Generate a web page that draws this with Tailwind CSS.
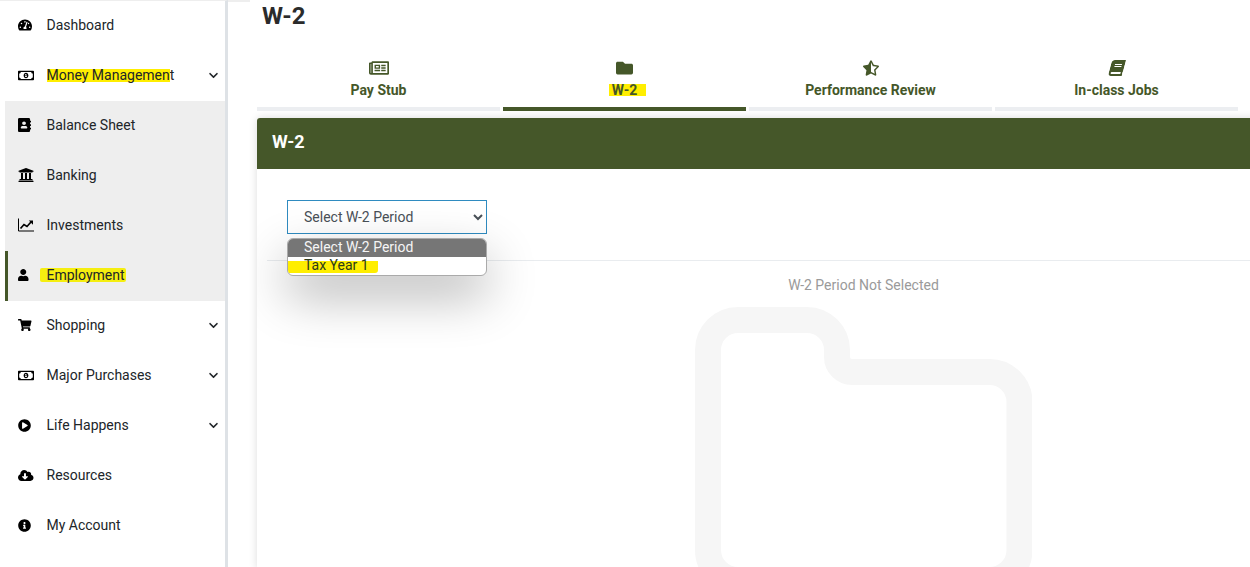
<!DOCTYPE html>
<html lang="en">
<head>
  <meta charset="UTF-8">
  <meta name="viewport" content="width=device-width, initial-scale=1.0">
  <title>W-2</title>
  <script src="https://cdn.jsdelivr.net/npm/@tailwindcss/browser@4"></script>
</head>
<body class="h-[567px] overflow-hidden bg-white font-[Roboto,sans-serif] text-sm text-[#212529]">
  <div class="flex h-[567px] w-[1250px] overflow-hidden">

    <!-- sidebar -->
    <aside class="h-full w-[228px] shrink-0 border-t border-r-[3px] border-t-[#eeeeee] border-r-[#dee2e6]">
      <nav class="flex flex-col">
        <a class="flex h-[50px] items-center pb-[2px] pl-[18px]">
          <span class="flex w-[28.5px] shrink-0 text-black"><svg class="h-[14px] w-[14px]" viewBox="0 0 576 512" fill="currentColor"><path d="M288 32C128.94 32 0 160.94 0 320c0 52.8 14.25 102.26 39.06 144.8 5.61 9.62 16.3 15.2 27.44 15.2h443c11.14 0 21.83-5.58 27.44-15.2C561.75 422.26 576 372.8 576 320c0-159.06-128.94-288-288-288zm0 64c14.71 0 26.58 10.13 30.32 23.65-1.11 2.26-2.64 4.23-3.45 6.67l-9.22 27.67c-5.13 3.49-10.97 6.01-17.64 6.01-17.67 0-32-14.33-32-32S270.33 96 288 96zM96 384c-17.67 0-32-14.33-32-32s14.33-32 32-32 32 14.33 32 32-14.33 32-32 32zm48-160c-17.67 0-32-14.33-32-32s14.33-32 32-32 32 14.33 32 32-14.33 32-32 32zm246.77-72.41l-61.33 184C343.13 347.33 352 364.54 352 384c0 11.72-3.38 22.55-8.88 32H232.88c-5.5-9.45-8.88-20.28-8.88-32 0-33.94 26.5-61.43 59.9-63.59l61.34-184.01c4.17-12.56 17.73-19.45 30.36-15.17 12.57 4.19 19.35 17.77 15.17 30.36zm14.66 57.2l15.52-46.55c3.47-1.29 7.13-2.23 11.05-2.23 17.67 0 32 14.33 32 32s-14.33 32-32 32c-11.38-.01-20.89-6.28-26.57-15.22zM480 384c-17.67 0-32-14.33-32-32s14.33-32 32-32 32 14.33 32 32-14.33 32-32 32z"/></svg></span>
          <span>Dashboard</span>
        </a>
        <a class="flex h-[50px] items-center pb-[2px] pl-[18px] pr-[7px]">
          <span class="flex w-[28.5px] shrink-0 text-black"><svg class="h-[15px] w-[16px]" viewBox="0 0 640 512" fill="currentColor"><path d="M320 144c-53.02 0-96 50.14-96 112 0 61.85 42.98 112 96 112 53 0 96-50.13 96-112 0-61.86-42.98-112-96-112zm40 168c0 4.42-3.58 8-8 8h-64c-4.42 0-8-3.58-8-8v-16c0-4.42 3.58-8 8-8h16v-55.44l-.47.31a7.992 7.992 0 0 1-11.09-2.22l-8.88-13.31a7.992 7.992 0 0 1 2.22-11.09l15.33-10.22a23.99 23.99 0 0 1 13.31-4.03H328c4.42 0 8 3.58 8 8v88h16c4.42 0 8 3.58 8 8v16zM608 64H32C14.33 64 0 78.33 0 96v320c0 17.67 14.33 32 32 32h576c17.67 0 32-14.33 32-32V96c0-17.67-14.33-32-32-32zm-16 272c-35.35 0-64 28.65-64 64H112c0-35.35-28.65-64-64-64V176c35.35 0 64-28.65 64-64h416c0 35.35 28.65 64 64 64v160z"/></svg></span>
          <span><span class="inline-block bg-[#ffee00] leading-[13px]">Money Managemen</span>t</span>
          <svg class="ml-auto h-[11px] w-[9px]" viewBox="0 0 448 512" fill="currentColor"><path d="M207.029 381.476L12.686 187.132c-9.373-9.373-9.373-24.569 0-33.941l22.667-22.667c9.357-9.357 24.522-9.375 33.901-.04L224 284.505l154.745-154.021c9.379-9.335 24.544-9.317 33.901.04l22.667 22.667c9.373 9.373 9.373 24.569 0 33.941L240.971 381.476c-9.373 9.372-24.569 9.372-33.942 0z"/></svg>
        </a>

        <div class="ml-[5px] flex flex-col bg-[#eeeeee]">
          <a class="flex h-[50px] items-center pb-[2px] pl-[13px]">
            <span class="flex w-[28.5px] shrink-0 text-black"><svg class="h-[14px] w-[13px]" viewBox="0 0 448 512" preserveAspectRatio="none" fill="currentColor"><path d="M436 160c6.6 0 12-5.4 12-12v-40c0-6.6-5.4-12-12-12h-20V48c0-26.5-21.5-48-48-48H48C21.5 0 0 21.5 0 48v416c0 26.5 21.5 48 48 48h320c26.5 0 48-21.5 48-48v-48h20c6.6 0 12-5.4 12-12v-40c0-6.6-5.4-12-12-12h-20v-64h20c6.6 0 12-5.4 12-12v-40c0-6.6-5.4-12-12-12h-20v-64h20zm-228-32c35.3 0 64 28.7 64 64s-28.7 64-64 64-64-28.7-64-64 28.7-64 64-64zm112 236.8c0 10.6-10 19.2-22.4 19.2H118.4C106 384 96 375.4 96 364.8v-19.2c0-31.8 30.1-57.6 67.2-57.6h5c12.3 5.1 25.7 8 39.8 8s27.6-2.9 39.8-8h5c37.1 0 67.2 25.8 67.2 57.6v19.2z"/></svg></span>
            <span>Balance Sheet</span>
          </a>
          <a class="flex h-[50px] items-center pb-[2px] pl-[13px]">
            <span class="flex w-[28.5px] shrink-0 text-black"><svg class="h-[16px] w-[16px]" viewBox="0 0 512 512" fill="currentColor"><path d="M496 128v16a8 8 0 0 1-8 8h-24v12c0 6.627-5.373 12-12 12H60c-6.627 0-12-5.373-12-12v-12H24a8 8 0 0 1-8-8v-16a8 8 0 0 1 4.941-7.392l232-88a7.996 7.996 0 0 1 6.118 0l232 88A8 8 0 0 1 496 128zm-24 304H40c-13.255 0-24 10.745-24 24v16a8 8 0 0 0 8 8h464a8 8 0 0 0 8-8v-16c0-13.255-10.745-24-24-24zM96 192v192H60c-6.627 0-12 5.373-12 12v20h416v-20c0-6.627-5.373-12-12-12h-36V192h-64v192h-64V192h-64v192h-64V192H96z"/></svg></span>
            <span>Banking</span>
          </a>
          <a class="flex h-[50px] items-center pb-[2px] pl-[13px]">
            <span class="flex w-[28.5px] shrink-0 text-black"><svg class="h-[14px] w-[16px]" viewBox="0 0 16 14" fill="none" stroke="currentColor"><path d="M.5 .5V13H16"/><path d="M2.5 10.5L6 6.5L9 8.5L13 4" stroke-width="1.7"/><path d="M10.8 2.6H15V6.8Z" fill="currentColor" stroke="none"/></svg></span>
            <span>Investments</span>
          </a>
          <a class="flex h-[50px] items-center border-l-[3px] border-l-[#455729] pb-[2px] pl-[10px]">
            <span class="flex w-[28.5px] shrink-0 text-black"><svg class="h-[12px] w-[10.5px]" viewBox="0 0 448 512" fill="currentColor"><path d="M224 256c70.7 0 128-57.3 128-128S294.7 0 224 0 96 57.3 96 128s57.3 128 128 128zm89.6 32h-16.7c-22.2 10.2-46.9 16-72.9 16s-50.6-5.8-72.9-16h-16.7C60.2 288 0 348.2 0 422.4V464c0 26.5 21.5 48 48 48h352c26.5 0 48-21.5 48-48v-41.6c0-74.2-60.2-134.4-134.4-134.4z"/></svg></span>
            <span class="-ml-[7px] inline-block rounded-[2px] bg-[#f5ee10] pl-[7px] pr-px leading-[14px]">Employment</span>
          </a>
        </div>

        <a class="flex h-[50px] items-center pb-[2px] pl-[18px] pr-[7px]">
          <span class="flex w-[28.5px] shrink-0 text-black"><svg class="h-[12px] w-[13.5px]" viewBox="0 0 576 512" fill="currentColor"><path d="M528.12 301.319l47.273-208C578.806 78.301 567.391 64 551.99 64H159.208l-9.166-44.81C147.758 8.021 137.93 0 126.529 0H24C10.745 0 0 10.745 0 24v16c0 13.255 10.745 24 24 24h69.883l70.248 343.435C147.325 417.1 136 435.222 136 456c0 30.928 25.072 56 56 56s56-25.072 56-56c0-15.674-6.447-29.835-16.824-40h209.647C430.447 426.165 424 440.326 424 456c0 30.928 25.072 56 56 56s56-25.072 56-56c0-22.172-12.888-41.332-31.579-50.405l5.517-24.276c3.413-15.018-8.002-29.319-23.403-29.319H218.117l-6.545-32h293.145c11.206 0 20.92-7.754 23.403-18.681z"/></svg></span>
          <span>Shopping</span>
          <svg class="ml-auto h-[11px] w-[9px]" viewBox="0 0 448 512" fill="currentColor"><path d="M207.029 381.476L12.686 187.132c-9.373-9.373-9.373-24.569 0-33.941l22.667-22.667c9.357-9.357 24.522-9.375 33.901-.04L224 284.505l154.745-154.021c9.379-9.335 24.544-9.317 33.901.04l22.667 22.667c9.373 9.373 9.373 24.569 0 33.941L240.971 381.476c-9.373 9.372-24.569 9.372-33.942 0z"/></svg>
        </a>
        <a class="flex h-[50px] items-center pb-[2px] pl-[18px] pr-[7px]">
          <span class="flex w-[28.5px] shrink-0 text-black"><svg class="h-[15px] w-[16px]" viewBox="0 0 640 512" fill="currentColor"><path d="M320 144c-53.02 0-96 50.14-96 112 0 61.85 42.98 112 96 112 53 0 96-50.13 96-112 0-61.86-42.98-112-96-112zm40 168c0 4.42-3.58 8-8 8h-64c-4.42 0-8-3.58-8-8v-16c0-4.42 3.58-8 8-8h16v-55.44l-.47.31a7.992 7.992 0 0 1-11.09-2.22l-8.88-13.31a7.992 7.992 0 0 1 2.22-11.09l15.33-10.22a23.99 23.99 0 0 1 13.31-4.03H328c4.42 0 8 3.58 8 8v88h16c4.42 0 8 3.58 8 8v16zM608 64H32C14.33 64 0 78.33 0 96v320c0 17.67 14.33 32 32 32h576c17.67 0 32-14.33 32-32V96c0-17.67-14.33-32-32-32zm-16 272c-35.35 0-64 28.65-64 64H112c0-35.35-28.65-64-64-64V176c35.35 0 64-28.65 64-64h416c0 35.35 28.65 64 64 64v160z"/></svg></span>
          <span>Major Purchases</span>
          <svg class="ml-auto h-[11px] w-[9px]" viewBox="0 0 448 512" fill="currentColor"><path d="M207.029 381.476L12.686 187.132c-9.373-9.373-9.373-24.569 0-33.941l22.667-22.667c9.357-9.357 24.522-9.375 33.901-.04L224 284.505l154.745-154.021c9.379-9.335 24.544-9.317 33.901.04l22.667 22.667c9.373 9.373 9.373 24.569 0 33.941L240.971 381.476c-9.373 9.372-24.569 9.372-33.942 0z"/></svg>
        </a>
        <a class="flex h-[50px] items-center pb-[2px] pl-[18px] pr-[7px]">
          <span class="flex w-[28.5px] shrink-0 text-black"><svg class="h-[13px] w-[13px]" viewBox="0 0 512 512" fill="currentColor"><path d="M256 8C119 8 8 119 8 256s111 248 248 248 248-111 248-248S393 8 256 8zm115.7 272l-176 101c-15.8 8.8-35.7-2.5-35.7-20.9V152c0-18.3 19.8-29.7 35.7-20.9l176 107c16.4 9.2 16.4 32.9 0 41.9z"/></svg></span>
          <span>Life Happens</span>
          <svg class="ml-auto h-[11px] w-[9px]" viewBox="0 0 448 512" fill="currentColor"><path d="M207.029 381.476L12.686 187.132c-9.373-9.373-9.373-24.569 0-33.941l22.667-22.667c9.357-9.357 24.522-9.375 33.901-.04L224 284.505l154.745-154.021c9.379-9.335 24.544-9.317 33.901.04l22.667 22.667c9.373 9.373 9.373 24.569 0 33.941L240.971 381.476c-9.373 9.372-24.569 9.372-33.942 0z"/></svg>
        </a>
        <a class="flex h-[50px] items-center pb-[2px] pl-[18px]">
          <span class="flex w-[28.5px] shrink-0 text-black"><svg class="h-[13px] w-[15.5px]" viewBox="0 0 640 512" fill="currentColor"><path d="M537.6 226.6c4.1-10.7 6.4-22.4 6.4-34.6 0-53-43-96-96-96-19.7 0-38.1 6-53.3 16.2C367 64.2 315.3 32 256 32c-88.4 0-160 71.6-160 160 0 2.7.1 5.4.2 8.1C40.2 219.8 0 273.2 0 336c0 79.5 64.5 144 144 144h368c70.7 0 128-57.3 128-128 0-61.9-44-113.6-102.4-125.4zm-132.9 88.7L299.3 420.7c-6.2 6.2-16.4 6.2-22.6 0L171.3 315.3c-10.1-10.1-2.9-27.3 11.3-27.3H248V176c0-8.8 7.2-16 16-16h48c8.8 0 16 7.2 16 16v112h65.4c14.2 0 21.4 17.2 11.3 27.3z"/></svg></span>
          <span>Resources</span>
        </a>
        <a class="flex h-[50px] items-center pb-[2px] pl-[18px]">
          <span class="flex w-[28.5px] shrink-0 text-black"><svg class="h-[13px] w-[13px]" viewBox="0 0 512 512" fill="currentColor"><path d="M256 8C119.043 8 8 119.083 8 256c0 136.997 111.043 248 248 248s248-111.003 248-248C504 119.083 392.957 8 256 8zm0 110c23.196 0 42 18.804 42 42s-18.804 42-42 42-42-18.804-42-42 18.804-42 42-42zm56 254c0 6.627-5.373 12-12 12h-88c-6.627 0-12-5.373-12-12v-24c0-6.627 5.373-12 12-12h12v-64h-12c-6.627 0-12-5.373-12-12v-24c0-6.627 5.373-12 12-12h64c6.627 0 12 5.373 12 12v100h12c6.627 0 12 5.373 12 12v24z"/></svg></span>
          <span>My Account</span>
        </a>
      </nav>
    </aside>

    <!-- main -->
    <main class="w-[1022px] shrink-0">
      <div class="h-[2px] w-[22px] bg-[#eeeeee]"></div>
      <h1 class="h-[28px] pl-[34px] text-2xl leading-[28px] font-bold text-[#2b2b2b]">W-2</h1>

      <div class="ml-[29px] mt-[30px] grid w-[981px] grid-cols-4 gap-[3px] text-[#455729]">
        <div class="flex flex-col items-center border-b-4 border-b-[#eceef1] pb-[6px]">
          <svg class="-my-px h-[18px] w-[20px]" viewBox="0 0 576 512" fill="currentColor"><path d="M552 64H112c-20.858 0-38.643 13.377-45.248 32H24c-13.255 0-24 10.745-24 24v272c0 30.928 25.072 56 56 56h496c13.255 0 24-10.745 24-24V88c0-13.255-10.745-24-24-24zM48 392V144h16v248c0 4.411-3.589 8-8 8s-8-3.589-8-8zm480 8H111.422c.374-2.614.578-5.283.578-8V112h416v288zM172 280h136c6.627 0 12-5.373 12-12v-96c0-6.627-5.373-12-12-12H172c-6.627 0-12 5.373-12 12v96c0 6.627 5.373 12 12 12zm28-80h80v40h-80v-40zm-40 140v-24c0-6.627 5.373-12 12-12h136c6.627 0 12 5.373 12 12v24c0 6.627-5.373 12-12 12H172c-6.627 0-12-5.373-12-12zm192 0v-24c0-6.627 5.373-12 12-12h104c6.627 0 12 5.373 12 12v24c0 6.627-5.373 12-12 12H364c-6.627 0-12-5.373-12-12zm0-144v-24c0-6.627 5.373-12 12-12h104c6.627 0 12 5.373 12 12v24c0 6.627-5.373 12-12 12H364c-6.627 0-12-5.373-12-12zm0 72v-24c0-6.627 5.373-12 12-12h104c6.627 0 12 5.373 12 12v24c0 6.627-5.373 12-12 12H364c-6.627 0-12-5.373-12-12z"/></svg>
          <span class="mt-[4px] leading-[21px] font-bold">Pay Stub</span>
        </div>
        <div class="flex flex-col items-center border-b-4 border-b-[#455729] pb-[6px]">
          <svg class="-my-px h-[18px] w-[17px]" viewBox="0 0 512 512" fill="currentColor"><path d="M464 128H272l-64-64H48C21.49 64 0 85.49 0 112v288c0 26.51 21.49 48 48 48h416c26.51 0 48-21.49 48-48V176c0-26.51-21.49-48-48-48z"/></svg>
          <span class="mt-[4px] leading-[21px] font-bold"><span class="-ml-[3px] -mr-[9px] inline-block bg-[#ffee00] pl-[3px] pr-[9px] leading-[12px]">W-2</span></span>
        </div>
        <div class="flex flex-col items-center border-b-4 border-b-[#eceef1] pb-[6px]">
          <svg class="h-[16px] w-[16px]" viewBox="0 0 536 512" fill="currentColor"><path d="M508.55 171.51L362.18 150.2 296.77 17.81C290.89 5.98 279.42 0 267.95 0c-11.4 0-22.79 5.9-28.69 17.81l-65.43 132.38-146.38 21.29c-26.25 3.8-36.77 36.09-17.74 54.59l105.89 103-25.06 145.48C86.98 495.33 103.57 512 122.15 512c4.93 0 10-1.17 14.87-3.75l130.95-68.68 130.94 68.7c4.86 2.55 9.92 3.71 14.83 3.71 18.6 0 35.22-16.61 31.66-37.4l-25.03-145.49 105.91-102.98c19.04-18.5 8.52-50.8-17.73-54.6zm-121.74 123.2l-18.12 17.62 4.28 24.88 19.52 113.45-102.13-53.59-22.38-11.74.03-317.19 51.03 103.29 11.18 22.63 25.01 3.64 114.23 16.63-82.65 80.38z"/></svg>
          <span class="mt-[4px] leading-[21px] font-bold">Performance Review</span>
        </div>
        <div class="flex flex-col items-center border-b-4 border-b-[#eceef1] pb-[6px]">
          <svg class="h-[16px] w-[14px] -skew-x-[15deg]" viewBox="0 0 448 512" fill="currentColor"><path d="M448 360V24c0-13.3-10.7-24-24-24H96C43 0 0 43 0 96v320c0 53 43 96 96 96h328c13.3 0 24-10.7 24-24v-16c0-7.5-3.5-14.3-8.9-18.7-4.2-15.4-4.2-59.3 0-74.7 5.4-4.3 8.9-11.1 8.9-18.6zM128 134c0-3.3 2.7-6 6-6h212c3.3 0 6 2.7 6 6v20c0 3.3-2.7 6-6 6H134c-3.3 0-6-2.7-6-6v-20zm0 64c0-3.3 2.7-6 6-6h212c3.3 0 6 2.7 6 6v20c0 3.3-2.7 6-6 6H134c-3.3 0-6-2.7-6-6v-20zm253.4 250H96c-17.7 0-32-14.3-32-32 0-17.6 14.4-32 32-32h285.4c-1.9 17.1-1.9 46.9 0 64z"/></svg>
          <span class="mt-[4px] leading-[21px] font-bold">In-class Jobs</span>
        </div>
      </div>

      <section class="ml-[29px] mt-[7px] w-[1213px] overflow-hidden rounded-t-[3px] shadow-[0_0_8px_rgba(0,0,0,0.14)]">
        <header class="flex h-[51px] items-center bg-[#455729] pb-[3px] pl-[15px] text-lg leading-none font-bold text-white">W-2</header>
        <div class="relative h-[400px] bg-white">
          <div class="px-[30px] pt-[31px]">
            <select class="h-[34px] w-[200px] border border-[#2f8bc0] bg-white pl-[12px] text-sm text-[#495057]">
              <option>Select W-2 Period</option>
              <option>Tax Year 1</option>
            </select>
          </div>
          <div class="mx-[10px] mt-[26px] border-t border-t-[#e9ecef]"></div>
          <p class="mt-[14px] text-center leading-[21px] text-[#9a9a9a]">W-2 Period Not Selected</p>
          <div class="mt-[11px] flex justify-center">
            <svg class="h-[300px] w-[337px] shrink-0" viewBox="0 0 337 300" fill="none" stroke="#f6f6f6" stroke-width="26"><path d="M43 13H112A30 30 0 0 1 142 43V50A15 15 0 0 0 157 65H294.5A30 30 0 0 1 324.5 95V243A30 30 0 0 1 294.5 273H43A30 30 0 0 1 13 243V43A30 30 0 0 1 43 13Z"/></svg>
          </div>

          <!-- open select list -->
          <ul class="absolute left-[30px] top-[69px] w-[200px] overflow-hidden rounded-[6px] border border-[#aaaaaa] bg-white leading-[16px] shadow-[0_20px_50px_rgba(0,0,0,0.3)]">
            <li class="h-[18px] bg-[#767676] pl-[16px] text-[#f5f5f5]">Select W-2 Period</li>
            <li class="h-[18px]"><span class="block h-[16px] w-[90px] rounded-br-[3px] bg-[linear-gradient(transparent_4px,#ffee00_4px)] pl-[16px] text-[#2d3a1a]">Tax Year 1</span></li>
          </ul>
        </div>
      </section>
    </main>
  </div>
</body>
</html>
